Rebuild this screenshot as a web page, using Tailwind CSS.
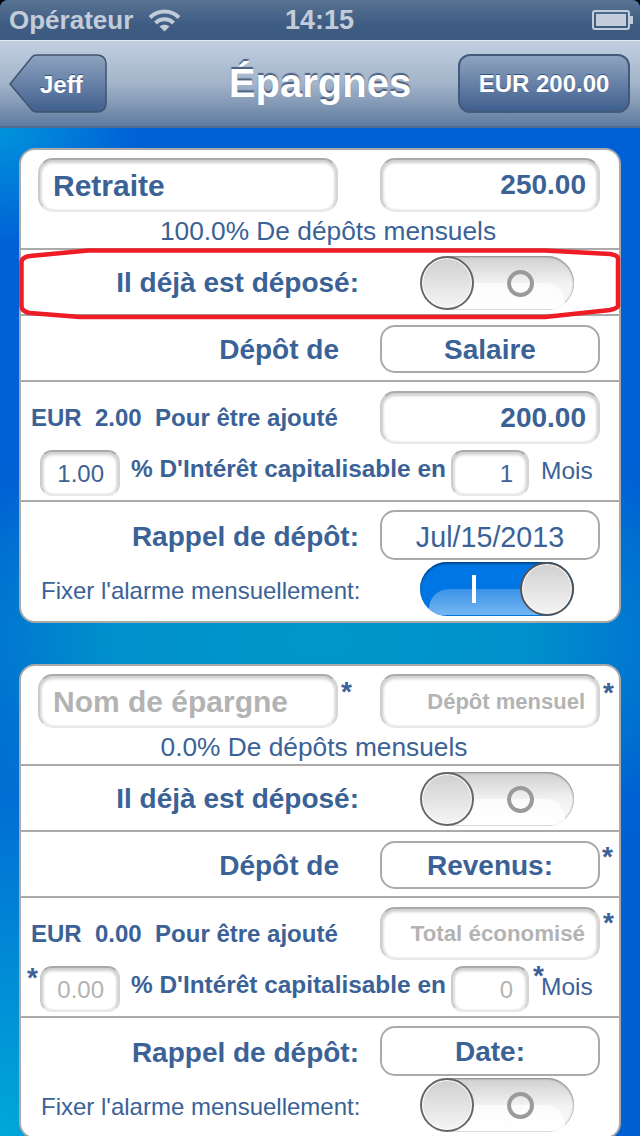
<!DOCTYPE html>
<html>
<head>
<meta charset="utf-8">
<script src="https://cdn.jsdelivr.net/npm/@tailwindcss/browser@4"></script>
</head>
<body class="bg-black">
<div class="relative w-[640px] h-[1136px] overflow-hidden rounded-t-[8px] font-['Liberation_Sans',Arial,sans-serif] text-[#3b6296] bg-[radial-gradient(ellipse_420px_240px_at_320px_640px,#0097c8_0%,#0090cc_50%,transparent_100%),radial-gradient(ellipse_300px_420px_at_0px_1136px,#00a8d8_0%,transparent_100%),radial-gradient(ellipse_140px_120px_at_0px_127px,#0094dc_0%,transparent_100%),linear-gradient(to_bottom,#0060d6,#0060d2)]">

  <!-- status bar -->
  <div class="flex items-center h-[40px] bg-[linear-gradient(to_bottom,#587392_0%,#3f5c83_60%,#3c5a80_100%)] text-[#c3ccd9] font-bold text-[26px] pl-[9px] pr-[6px]">
    <span class="w-[139px]">Opérateur</span>
    <svg class="w-[33px] h-[24px]" viewBox="0 0 33 24" fill="none" stroke="#c3ccd9" stroke-width="4">
      <path d="M2 9.5C10 1.5 23 1.5 31 9.5"/>
      <path d="M7.5 15C12.5 10 20.500 10 25.500 15"/>
      <path d="M16.5 23.5L11.5 18.5C14 16 19 16 21.500 18.500Z" fill="#c3ccd9" stroke="none"/>
    </svg>
    <span class="ml-[104px] w-[307px] text-[27px]">14:15</span>
    <svg class="w-[42px] h-[20px]" viewBox="0 0 42 20">
      <rect x="1" y="1" width="36" height="18" rx="2" fill="none" stroke="#c3ccd9" stroke-width="2"/>
      <rect x="4" y="4" width="30" height="12" fill="#c3ccd9"/>
      <rect x="38" y="6" width="3" height="8" fill="#c3ccd9"/>
    </svg>
  </div>
  <div class="h-[1px] bg-[#e8edf3]"></div>

  <!-- nav bar -->
  <div class="relative flex items-center justify-between h-[87px] pl-[9px] pr-[10px] bg-[linear-gradient(to_bottom,#c1cfe0_0%,#a3b4ca_50%,#5f7b9f_100%)] border-b-2 border-[#4d6a90]">
    <div class="relative w-[98px] h-[60px]">
      <svg class="absolute inset-0" width="98" height="60" viewBox="0 0 98 60">
        <defs><linearGradient id="b" x1="0" y1="0" x2="0" y2="1"><stop offset="0" stop-color="#8ea3bf"/><stop offset="1" stop-color="#3f5f8e"/></linearGradient></defs>
        <path d="M1 30L23 3C24 1.5 26 1 28 1H88C93 1 97 4 97 9V50C97 55 93 58 88 58H28C26 58 24 57.500 23 56Z" fill="url(#b)" stroke="#41536e" stroke-width="1.500"/>
      </svg>
      <span class="absolute left-[31px] top-[13px] font-bold text-[24px] text-white [text-shadow:0_-1px_0_#33507a]">Jeff</span>
    </div>
    <div class="absolute left-0 right-0 top-[17px] text-center font-bold text-[40px] leading-[50px] text-white [text-shadow:0_-2px_1px_#4a5f7e]">Épargnes</div>
    <div class="flex items-center justify-center w-[172px] h-[59px] rounded-[12px] border-2 border-[#45597a] bg-[linear-gradient(to_bottom,#8ea3bf,#3f5f8e)] font-bold text-[24px] text-white [text-shadow:0_-1px_0_#33507a]">EUR 200.00</div>
  </div>

  <!-- cards -->
  <div class="px-[19px] pt-[20px] flex flex-col gap-[41px]">

    <!-- card 1 -->
    <div class="rounded-[16px] border-2 border-[#a9a9a9] bg-white">
      <div class="h-[100px] border-b-2 border-[#aaaaaa] pt-[8px]">
        <div class="flex pl-[17px]">
          <div class="flex items-center w-[300px] h-[54px] pl-[13px] rounded-[15px] border-2 border-[#e8e8e8] border-t-[#aaaaaa] border-l-[#cccccc] border-r-[#d4d4d4] shadow-[inset_0_3px_3px_#d0d0d0,inset_2px_0_2px_#e4e4e4,inset_-2px_0_2px_#e4e4e4] font-bold text-[30px]">Retraite</div>
          <div class="flex items-center justify-end w-[220px] h-[54px] ml-[42px] pr-[12px] rounded-[15px] border-2 border-[#e8e8e8] border-t-[#aaaaaa] border-l-[#cccccc] border-r-[#d4d4d4] shadow-[inset_0_3px_3px_#d0d0d0,inset_2px_0_2px_#e4e4e4,inset_-2px_0_2px_#e4e4e4] font-bold text-[28px]">250.00</div>
        </div>
        <div class="text-center text-[26.300px] leading-[28px] pt-[5px] pl-[16px]">100.0% De dépôts mensuels</div>
      </div>
      <div class="flex items-center h-[66px] border-b-2 border-[#aaaaaa] pt-[2px]">
        <div class="w-[338px] text-right font-bold text-[28px]">Il déjà est déposé:</div>
        <div class="relative ml-[61px] w-[154px] h-[54px] rounded-full overflow-hidden bg-[linear-gradient(to_bottom,#cfcfcf,#f2f2f2_50%,#fafafa)] shadow-[inset_0_1px_2px_#888888,inset_0_0_2px_#999999]">
          <div class="absolute left-[40px] right-[9px] bottom-[1px] h-[26px] rounded-tr-[20px] bg-[linear-gradient(to_bottom,#fbfbfb,#ffffff)]"></div>
          <div class="absolute left-[87px] top-[14px] w-[27px] h-[27px] rounded-full border-4 border-[#9a9a9a]"></div>
          <div class="absolute left-0 top-0 w-[54px] h-[54px] rounded-full border-2 border-[#666666] bg-[linear-gradient(to_bottom,#d0d0d0,#f5f5f5)] shadow-[inset_0_0_0_1px_#ffffff]"></div>
        </div>
      </div>
      <div class="flex items-center h-[66px] border-b-2 border-[#aaaaaa] pt-[2px]">
        <div class="w-[318px] pt-[2px] text-right font-bold text-[28px]">Dépôt de</div>
        <div class="flex items-center justify-center ml-[41px] w-[220px] h-[48px] pt-[2px] rounded-[15px] border-2 border-[#aaaaaa] font-bold text-[28px]">Salaire</div>
      </div>
      <div class="h-[120px] border-b-2 border-[#aaaaaa] pt-[9px]">
        <div class="flex items-center">
          <div class="w-[318px] pl-[10px] font-bold text-[24px] whitespace-pre">EUR  2.00  Pour être ajouté</div>
          <div class="flex items-center justify-end w-[220px] h-[53px] ml-[41px] pr-[12px] rounded-[15px] border-2 border-[#e8e8e8] border-t-[#aaaaaa] border-l-[#cccccc] border-r-[#d4d4d4] shadow-[inset_0_3px_3px_#d0d0d0,inset_2px_0_2px_#e4e4e4,inset_-2px_0_2px_#e4e4e4] font-bold text-[28px]">200.00</div>
        </div>
        <div class="flex items-center mt-[6px] pl-[19px]">
          <div class="flex items-center justify-end w-[80px] h-[46px] pr-[14px] pt-[1px] rounded-[12px] border-2 border-[#e8e8e8] border-t-[#aaaaaa] border-l-[#cccccc] border-r-[#d4d4d4] shadow-[inset_0_3px_3px_#d0d0d0,inset_2px_0_2px_#e4e4e4,inset_-2px_0_2px_#e4e4e4] text-[24px]">1.00</div>
          <div class="ml-[11px] w-[320px] font-bold text-[24.400px] whitespace-nowrap -mt-[8px]">% D'Intérêt capitalisable en</div>
          <div class="flex items-center justify-end w-[78px] h-[46px] pr-[14px] pt-[1px] rounded-[12px] border-2 border-[#e8e8e8] border-t-[#aaaaaa] border-l-[#cccccc] border-r-[#d4d4d4] shadow-[inset_0_3px_3px_#d0d0d0,inset_2px_0_2px_#e4e4e4,inset_-2px_0_2px_#e4e4e4] text-[24px]">1</div>
          <div class="ml-[12px] text-[24.500px] -mt-[4px]">Mois</div>
        </div>
      </div>
      <div class="h-[119px] pt-[8px]">
        <div class="flex items-center">
          <div class="w-[338px] pt-[4px] text-right font-bold text-[28px]">Rappel de dépôt:</div>
          <div class="flex items-center justify-center ml-[21px] w-[220px] h-[50px] pt-[6px] rounded-[15px] border-2 border-[#aaaaaa] text-[28.700px]">Jul/15/2013</div>
        </div>
        <div class="flex items-center mt-[2px]">
          <div class="w-[338px] pl-[20px] pt-[4px] text-[24px] whitespace-nowrap">Fixer l'alarme mensuellement:</div>
          <div class="relative ml-[61px] w-[154px] h-[54px] rounded-full overflow-hidden bg-[#0076e4] shadow-[inset_0_2px_2px_#00488c]">
            <div class="absolute left-[9px] right-[30px] bottom-[1px] h-[26px] rounded-tl-[20px] bg-[linear-gradient(to_bottom,#3c92e8,#74b6f2)]"></div>
            <div class="absolute left-[52px] top-[13px] w-[4px] h-[28px] bg-white"></div>
            <div class="absolute right-0 top-0 w-[54px] h-[54px] rounded-full border-2 border-[#555555] bg-[linear-gradient(to_bottom,#d0d0d0,#f5f5f5)] shadow-[inset_0_0_0_1px_#ffffff]"></div>
          </div>
        </div>
      </div>
    </div>

    <!-- card 2 -->
    <div class="rounded-[16px] border-2 border-[#a9a9a9] bg-white">
      <div class="h-[100px] border-b-2 border-[#aaaaaa] pt-[8px]">
        <div class="flex pl-[17px]">
          <div class="relative flex items-center w-[300px] h-[54px] pl-[13px] rounded-[15px] border-2 border-[#e8e8e8] border-t-[#aaaaaa] border-l-[#cccccc] border-r-[#d4d4d4] shadow-[inset_0_3px_3px_#d0d0d0,inset_2px_0_2px_#e4e4e4,inset_-2px_0_2px_#e4e4e4] font-bold text-[30px] text-[#b3b3b3]">Nom de épargne
            <span class="absolute -right-[16px] -top-[5px] text-[28px] text-[#3b6296]">*</span>
          </div>
          <div class="relative flex items-center justify-end w-[220px] h-[54px] ml-[42px] pr-[13px] rounded-[15px] border-2 border-[#e8e8e8] border-t-[#aaaaaa] border-l-[#cccccc] border-r-[#d4d4d4] shadow-[inset_0_3px_3px_#d0d0d0,inset_2px_0_2px_#e4e4e4,inset_-2px_0_2px_#e4e4e4] font-bold text-[22px] text-[#b3b3b3]">Dépôt mensuel
            <span class="absolute -right-[16px] -top-[4px] text-[28px] text-[#3b6296]">*</span>
          </div>
        </div>
        <div class="text-center text-[26.300px] leading-[28px] pt-[5px] pr-[12px]">0.0% De dépôts mensuels</div>
      </div>
      <div class="flex items-center h-[66px] border-b-2 border-[#aaaaaa] pt-[2px]">
        <div class="w-[338px] text-right font-bold text-[28px]">Il déjà est déposé:</div>
        <div class="relative ml-[61px] w-[154px] h-[54px] rounded-full overflow-hidden bg-[linear-gradient(to_bottom,#cfcfcf,#f2f2f2_50%,#fafafa)] shadow-[inset_0_1px_2px_#888888,inset_0_0_2px_#999999]">
          <div class="absolute left-[40px] right-[9px] bottom-[1px] h-[26px] rounded-tr-[20px] bg-[linear-gradient(to_bottom,#fbfbfb,#ffffff)]"></div>
          <div class="absolute left-[87px] top-[14px] w-[27px] h-[27px] rounded-full border-4 border-[#9a9a9a]"></div>
          <div class="absolute left-0 top-0 w-[54px] h-[54px] rounded-full border-2 border-[#666666] bg-[linear-gradient(to_bottom,#d0d0d0,#f5f5f5)] shadow-[inset_0_0_0_1px_#ffffff]"></div>
        </div>
      </div>
      <div class="flex items-center h-[66px] border-b-2 border-[#aaaaaa] pt-[2px]">
        <div class="w-[318px] pt-[2px] text-right font-bold text-[28px]">Dépôt de</div>
        <div class="relative flex items-center justify-center ml-[41px] w-[220px] h-[48px] pt-[2px] rounded-[15px] border-2 border-[#aaaaaa] font-bold text-[28px]">Revenus:
          <span class="absolute -right-[15px] -top-[7px] text-[28px] font-bold">*</span>
        </div>
      </div>
      <div class="h-[120px] border-b-2 border-[#aaaaaa] pt-[9px]">
        <div class="flex items-center">
          <div class="w-[318px] pl-[10px] font-bold text-[24px] whitespace-pre">EUR  0.00  Pour être ajouté</div>
          <div class="relative flex items-center justify-end w-[220px] h-[53px] ml-[41px] pr-[13px] rounded-[15px] border-2 border-[#e8e8e8] border-t-[#aaaaaa] border-l-[#cccccc] border-r-[#d4d4d4] shadow-[inset_0_3px_3px_#d0d0d0,inset_2px_0_2px_#e4e4e4,inset_-2px_0_2px_#e4e4e4] font-bold text-[22.300px] text-[#b3b3b3]">Total économisé
            <span class="absolute -right-[16px] -top-[7px] text-[28px] text-[#3b6296]">*</span>
          </div>
        </div>
        <div class="flex items-center mt-[6px] pl-[19px]">
          <div class="relative flex items-center justify-end w-[80px] h-[46px] pr-[14px] pt-[1px] rounded-[12px] border-2 border-[#e8e8e8] border-t-[#aaaaaa] border-l-[#cccccc] border-r-[#d4d4d4] shadow-[inset_0_3px_3px_#d0d0d0,inset_2px_0_2px_#e4e4e4,inset_-2px_0_2px_#e4e4e4] text-[24px] text-[#b3b3b3]">0.00
            <span class="absolute -left-[15px] -top-[11px] text-[28px] font-bold text-[#3b6296]">*</span>
          </div>
          <div class="ml-[11px] w-[320px] font-bold text-[24.400px] whitespace-nowrap -mt-[8px]">% D'Intérêt capitalisable en</div>
          <div class="relative flex items-center justify-end w-[78px] h-[46px] pr-[14px] pt-[1px] rounded-[12px] border-2 border-[#e8e8e8] border-t-[#aaaaaa] border-l-[#cccccc] border-r-[#d4d4d4] shadow-[inset_0_3px_3px_#d0d0d0,inset_2px_0_2px_#e4e4e4,inset_-2px_0_2px_#e4e4e4] text-[24px] text-[#b3b3b3]">0
            <span class="absolute -right-[17px] -top-[13px] text-[28px] font-bold text-[#3b6296]">*</span>
          </div>
          <div class="ml-[12px] text-[24.500px] -mt-[4px]">Mois</div>
        </div>
      </div>
      <div class="h-[119px] pt-[8px]">
        <div class="flex items-center">
          <div class="w-[338px] pt-[4px] text-right font-bold text-[28px]">Rappel de dépôt:</div>
          <div class="flex items-center justify-center ml-[21px] w-[220px] h-[50px] pt-[2px] rounded-[15px] border-2 border-[#aaaaaa] font-bold text-[28px]">Date:</div>
        </div>
        <div class="flex items-center mt-[2px]">
          <div class="w-[338px] pl-[20px] pt-[4px] text-[24px] whitespace-nowrap">Fixer l'alarme mensuellement:</div>
          <div class="relative ml-[61px] w-[154px] h-[54px] rounded-full overflow-hidden bg-[linear-gradient(to_bottom,#cfcfcf,#f2f2f2_50%,#fafafa)] shadow-[inset_0_1px_2px_#888888,inset_0_0_2px_#999999]">
            <div class="absolute left-[40px] right-[9px] bottom-[1px] h-[26px] rounded-tr-[20px] bg-[linear-gradient(to_bottom,#fbfbfb,#ffffff)]"></div>
            <div class="absolute left-[87px] top-[14px] w-[27px] h-[27px] rounded-full border-4 border-[#9a9a9a]"></div>
            <div class="absolute left-0 top-0 w-[54px] h-[54px] rounded-full border-2 border-[#666666] bg-[linear-gradient(to_bottom,#d0d0d0,#f5f5f5)] shadow-[inset_0_0_0_1px_#ffffff]"></div>
          </div>
        </div>
      </div>
    </div>
  </div>

  <!-- red annotation oval -->
  <svg class="absolute left-0 top-0 pointer-events-none" width="640" height="330" viewBox="0 0 640 330" fill="none">
    <path d="M88 250.500H545L610 254Q617 255 618 258V306Q618 308 610 310L545 317H80L30 313Q22 312 21.500 306V262Q22 257 30 256Z" stroke="#ee1c25" stroke-width="4.500"/>
  </svg>
</div>
</body>
</html>
